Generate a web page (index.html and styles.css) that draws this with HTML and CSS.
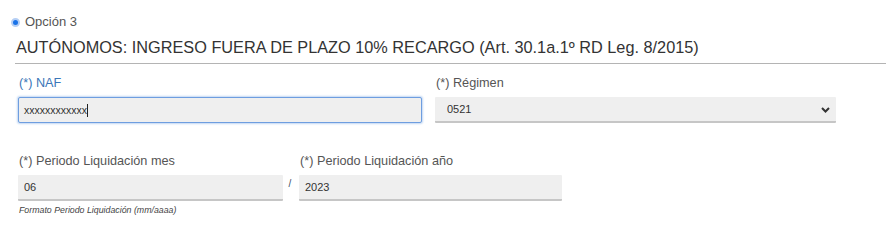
FILE: index.html
```html
<!DOCTYPE html>
<html>
<head>
<meta charset='utf-8' />
<title>Opción 3</title>
<link rel="stylesheet" href="styles.css">
</head>
<body>

<div class="option">
  <span class="radio"></span>
  <label>Opción 3</label>
</div>

<h2 class="section-title">AUTÓNOMOS: INGRESO FUERA DE PLAZO 10% RECARGO (Art. 30.1a.1º RD Leg. 8/2015)</h2>

<div class="form">
  <div class="row row-top">
    <div class="field">
      <label class="active">(*) NAF</label>
      <div class="input focused">xxxxxxxxxxxx<span class="caret"></span></div>
    </div>
    <div class="field">
      <label>(*) Régimen</label>
      <div class="select-wrap">
        <select><option>0521</option></select>
        <svg class="chevron" width="9" height="6" viewBox="0 0 9 6"><path d="M1 1 L4.5 4.5 L8 1" fill="none" stroke="#333" stroke-width="2"/></svg>
      </div>
    </div>
  </div>

  <div class="row row-period">
    <div class="field">
      <label>(*) Periodo Liquidación mes</label>
      <input type="text" value="06" />
      <small class="hint">Formato Periodo Liquidación (mm/aaaa)</small>
    </div>
    <div class="slash">/</div>
    <div class="field">
      <label>(*) Periodo Liquidación año</label>
      <input type="text" value="2023" />
    </div>
  </div>
</div>

</body>
</html>
```

FILE: styles.css
```css
body {
  font-family: "Liberation Sans", Arial, sans-serif;
  background-color: #fff;
  color: #555;
  margin: 0;
}
.option {
  display: flex;
  align-items: center;
  padding: 14px 0 0 11px;
  height: 16px;
  font-size: 13px;
  line-height: 16px;
}
.radio {
  box-sizing: border-box;
  width: 9px;
  height: 9px;
  border-radius: 50%;
  background: #1a73e8;
  border: 2px solid #b5cff5;
  margin-right: 5px;
}
.section-title {
  font-size: 16.3px;
  font-weight: normal;
  line-height: 20px;
  color: #333;
  margin: 7px 0 0 15px;
  padding: 0 0 6px 1px;
  border-bottom: 1px solid #b4b4b4;
}
.form {
  padding-left: 18px;
}
.row {
  display: grid;
}
.row-top {
  grid-template-columns: 404px 401px;
  column-gap: 13px;
  margin-top: 11px;
}
.row-period {
  grid-template-columns: 265px 16px 263px;
  margin-top: 30px;
}
.field label {
  display: block;
  font-size: 12.7px;
  line-height: 16px;
  margin: 0 0 6px 1px;
  color: #555;
}
.field label.active {
  color: #3a77b8;
}
input, select, .input {
  display: block;
  box-sizing: border-box;
  width: 100%;
  height: 26px;
  font-family: "Liberation Sans", Arial, sans-serif;
  font-size: 11px;
  color: #333;
  background: #efefef;
  border: none;
  border-bottom: 2px solid #c6c6c6;
  border-radius: 1px;
  padding: 0 6px;
  margin: 0;
  outline: none;
}
.input.focused {
  display: flex;
  align-items: center;
  font-size: 10.5px;
  border: 1px solid #6e9ee0;
  box-shadow: 0 0 2px 1px #c2d7f3;
  border-radius: 2px;
  padding-left: 5px;
}
.caret {
  width: 1px;
  height: 13px;
  background: #222;
}
select {
  -webkit-appearance: none;
  appearance: none;
  padding-left: 12px;
}
.select-wrap {
  position: relative;
}
.chevron {
  position: absolute;
  right: 6px;
  top: 10px;
}
.slash {
  font-size: 10px;
  color: #3e4c66;
  text-align: center;
  padding-top: 25px;
  padding-right: 2px;
}
.hint {
  display: block;
  font-size: 8.8px;
  font-style: italic;
  line-height: 10px;
  margin: 4px 0 0 1px;
  color: #444;
}
```
